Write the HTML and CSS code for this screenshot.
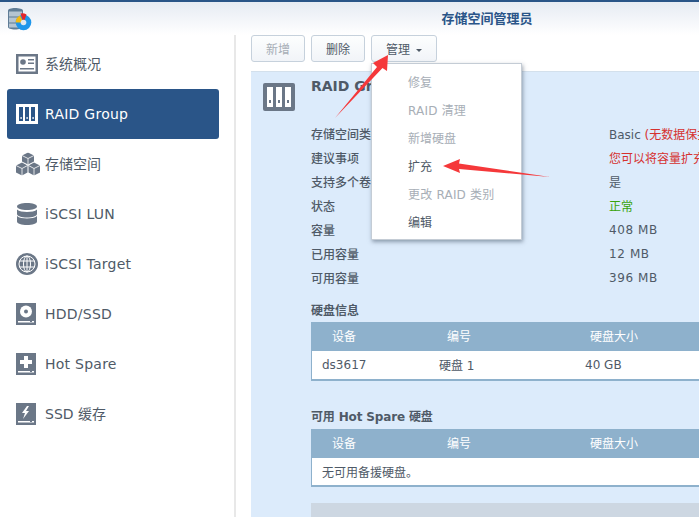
FILE: index.html
```
<!DOCTYPE html>
<html lang="zh-CN">
<head>
<meta charset="utf-8">
<title>存储空间管理员</title>
<link rel="stylesheet" href="styles.css">
</head>
<body>
<div class="app">
  <header class="header">
    <svg class="logo" width="24" height="23" viewBox="0 0 24 23">
      <path d="M0 2.500C0 1 3 0 7 0s8 1 8 2.500V19c0 1.500-4 2.500-8 2.500S0 20.500 0 19z" fill="#5f7c96"/>
      <path d="M1 3.500h13v5H1zM1 9.500h13v5H1zM1 15.500h13v4H1z" fill="#b4c4d2"/>
      <circle cx="15.500" cy="14.500" r="7.800" fill="#1e96ea"/>
      <path d="M7.700 14.500A7.800 7.800 0 0 1 12 7.500l3.500 7z" fill="#f5b90f"/>
      <path d="M12.500 5.500a7.800 7.800 0 0 1 6 1l-3 8z" fill="#e3262b"/>
      <circle cx="15.500" cy="14.500" r="2.800" fill="#dfe8f0"/>
    </svg>
    <div class="title">存储空间管理员</div>
  </header>
  <div class="main">
    <nav class="side">
      <a class="item">
        <svg class="ico" width="22" height="20" viewBox="0 0 22 20"><path d="M0 0h22v20H0z" fill="#6b7787"/><path d="M2.500 2.500h17v15h-17z" fill="#fff"/><circle cx="7" cy="8" r="2.800" fill="#6b7787"/><path d="M4 14h14v1.500H4zM12 5h6v1.500h-6zM12 8.500h6V10h-6z" fill="#6b7787"/></svg>
        <span>系统概况</span>
      </a>
      <a class="item active">
        <svg class="ico" width="22" height="20" viewBox="0 0 22 20"><path d="M0 0h22v20H0z" fill="#fff"/><path d="M3 3h4v14H3zM9 3h4v14H9zM15 3h4v14h-4z" fill="#2a5588"/><path d="M4.500 13h1.200v2H4.500zM10.500 13h1.200v2h-1.200zM16.500 13h1.200v2h-1.200z" fill="#fff"/></svg>
        <span class="lat">RAID Group</span>
      </a>
      <a class="item">
        <svg class="ico" width="24" height="23" viewBox="0 0 24 23"><path d="M12 0l6 3v6l-6 3-6-3V3zM6 10l5.500 3v7L6 23l-6-3v-7zM18 10l6 3v7l-6 3-5.500-3v-7z" fill="#6b7787"/><path d="M6 3l6 3 6-3M12 6v6M0 13l6 3 5.500-3M6 16v7M12.500 13l5.500 3 6-3M18 16v7" stroke="#fff" stroke-width=".8" fill="none"/></svg>
        <span>存储空间</span>
      </a>
      <a class="item">
        <svg class="ico" width="22" height="22" viewBox="0 0 22 22"><path d="M1 3.500C1 1.500 5.500 0 11 0s10 1.500 10 3.500S16.500 7 11 7 1 5.500 1 3.500zM1 6.500C3 8.300 7 9 11 9s8-.7 10-2.500v4.500c0 2-4.500 3.500-10 3.500S1 13 1 11zM1 13c2 1.800 6 2.500 10 2.500s8-.7 10-2.500v5.500c0 2-4.500 3.500-10 3.500s-10-1.500-10-3.500z" fill="#6b7787"/></svg>
        <span class="lat">iSCSI LUN</span>
      </a>
      <a class="item">
        <svg class="ico" width="22" height="22" viewBox="0 0 22 22"><circle cx="11" cy="11" r="11" fill="#6b7787"/><g fill="none" stroke="#fff" stroke-width="1"><circle cx="11" cy="11" r="8"/><ellipse cx="11" cy="11" rx="3.500" ry="8"/><path d="M11 3v16M3.500 8h15M3.500 14h15"/></g></svg>
        <span class="lat">iSCSI Target</span>
      </a>
      <a class="item">
        <svg class="ico" width="20" height="22" viewBox="0 0 20 22"><path d="M0 0h20v22H0z" fill="#6b7787"/><circle cx="10" cy="8.500" r="6" fill="#fff"/><circle cx="10" cy="8.500" r="2" fill="#6b7787"/><path d="M2 18h16v1.500H2z" fill="#fff"/><path d="M14 18h2v1h-2z" fill="#6b7787"/></svg>
        <span class="lat">HDD/SSD</span>
      </a>
      <a class="item">
        <svg class="ico" width="20" height="22" viewBox="0 0 20 22"><path d="M0 0h20v22H0z" fill="#6b7787"/><path d="M8 3h4v4h4v4h-4v4H8v-4H4V7h4z" fill="#fff"/><path d="M2 18h16v1.500H2z" fill="#fff"/><path d="M14 18h2v1h-2z" fill="#6b7787"/></svg>
        <span class="lat">Hot Spare</span>
      </a>
      <a class="item">
        <svg class="ico" width="20" height="22" viewBox="0 0 20 22"><path d="M0 0h20v22H0z" fill="#6b7787"/><path d="M11 3L6 10h3l-2 6 6-8h-3l3-5z" fill="#fff"/><path d="M2 18h16v1.500H2z" fill="#fff"/><path d="M14 18h2v1h-2z" fill="#6b7787"/></svg>
        <span>SSD 缓存</span>
      </a>
    </nav>
    <section class="content">
      <div class="toolbar">
        <button class="btn off">新增</button>
        <button class="btn">删除</button>
        <button class="btn menu-btn">管理<i class="caret"></i></button>
      </div>
      <div class="panel">
        <svg class="raid-ico" width="32" height="28" viewBox="0 0 32 28"><path d="M2 0h28a2 2 0 0 1 2 2v24a2 2 0 0 1-2 2H2a2 2 0 0 1-2-2V2a2 2 0 0 1 2-2z" fill="#6b7787"/><path d="M4 4h6v20H4zM13 4h6v20h-6zM22 4h6v20h-6z" fill="#fff"/><path d="M6 17h2v3H6zM15 17h2v3h-2zM24 17h2v3h-2z" fill="#6b7787"/></svg>
        <div class="detail">
          <h2 class="name">RAID Group 1</h2>
          <dl class="info">
            <dt>存储空间类型</dt><dd>Basic <span class="red">(无数据保护)</span></dd>
            <dt>建议事项</dt><dd class="red">您可以将容量扩充</dd>
            <dt>支持多个卷</dt><dd>是</dd>
            <dt>状态</dt><dd class="green">正常</dd>
            <dt>容量</dt><dd class="num">408 MB</dd>
            <dt>已用容量</dt><dd class="num">12 MB</dd>
            <dt>可用容量</dt><dd class="num">396 MB</dd>
          </dl>
          <h3 class="sec first">硬盘信息</h3>
          <div class="table">
            <div class="thead"><span class="c1">设备</span><span class="c2">编号</span><span class="c3">硬盘大小</span></div>
            <div class="trow"><span class="d1">ds3617</span><span class="d2">硬盘 1</span><span class="d3">40 GB</span></div>
          </div>
          <h3 class="sec second">可用 Hot Spare 硬盘</h3>
          <div class="table">
            <div class="thead"><span class="c1">设备</span><span class="c2">编号</span><span class="c3">硬盘大小</span></div>
            <div class="trow short"><span class="d1 wide">无可用备援硬盘。</span></div>
          </div>
          <div class="bar"></div>
        </div>
      </div>
    </section>
  </div>
  <ul class="menu">
    <li class="dis">修复</li>
    <li class="dis lat-sm">RAID 清理</li>
    <li class="dis">新增硬盘</li>
    <li>扩充</li>
    <li class="dis lat-sm">更改 RAID 类别</li>
    <li>编辑</li>
  </ul>
  <svg class="arrows" width="699" height="517" viewBox="0 0 699 517">
    <path d="M335 118L377 67 373 63 388 55 387 71 382.500 68z" fill="#f5383a"/>
    <path d="M443 166L460 159 459 163.500 550 177 459 169 460 173z" fill="#f5383a"/>
  </svg>
</div>
</body>
</html>
```
FILE: styles.css
```
* { box-sizing: border-box; }
html, body { margin: 0; padding: 0; height: 100%; overflow: hidden; }
body { background: #fff; color: #4f5a67; font-family: "DejaVu Sans", "Noto Sans CJK SC", sans-serif; font-size: 12px; }
.app { position: relative; width: 699px; height: 517px; overflow: hidden; display: flex; flex-direction: column; }
.header { flex: none; height: 35px; border-top: 2px solid #2a5588; background: linear-gradient(#e6ebf3, #fff); display: flex; align-items: center; justify-content: center; padding-left: 275px; position: relative; }
.logo { position: absolute; left: 8px; top: 6px; }
.title { font-size: 13px; font-weight: 700; color: #2a5588; margin-top: -2px; }
.main { flex: 1; display: flex; min-height: 0; }
.side { flex: none; width: 236px; padding: 4px 15px 0 7px; border-right: 2px solid #e8e8e8; display: flex; flex-direction: column; }
.item { height: 50px; display: flex; align-items: center; font-size: 14px; color: #4f5a67; border-radius: 3px; position: relative; }
.item .ico { position: absolute; left: 9px; top: 50%; transform: translateY(-50%); }
.item span { margin-left: 38px; margin-bottom: 2px; }
.item span.lat { letter-spacing: .25px; margin-bottom: 0; }
.item.active { background: #2a5588; color: #fff; }
.content { flex: 1; min-width: 0; padding-left: 15px; display: flex; flex-direction: column; }
.toolbar { flex: none; display: flex; gap: 6px; height: 36px; }
.btn { width: 54px; height: 27px; padding: 0; border: 1px solid #c6d1dc; border-radius: 3px; background: linear-gradient(#fdfefe, #f1f4f8); font-family: inherit; font-size: 12px; color: #4f5a67; }
.btn.off { color: #a7aeb6; }
.menu-btn { width: 66px; }
.caret { display: inline-block; margin-left: 6px; vertical-align: 2px; border-left: 3px solid transparent; border-right: 3px solid transparent; border-top: 3px solid #4f5a67; }
.panel { flex: 1; min-height: 0; background: #dcebfb; border-top: 1px solid #d3e0ec; padding: 11px 0 0 12px; display: flex; overflow: hidden; }
.raid-ico { flex: none; }
.detail { flex: none; width: 600px; margin-left: 16px; margin-top: -5px; }
.name { margin: 0; font-size: 14px; font-weight: 700; line-height: 17px; color: #4f5a67; }
.info { margin: 26px 0 0; display: grid; grid-template-columns: 298px 1fr; grid-auto-rows: 24px; align-items: center; white-space: nowrap; }
.info dt { font-weight: 500; }
.info dd { margin: 0; }
.info .num { letter-spacing: .6px; padding-top: 2px; }
.red { color: #d6312f; }
.green { color: #3aa30b; }
.sec { margin: 0; font-size: 12px; font-weight: 700; line-height: 16px; color: #4f5a67; }
.first { margin-top: 14px; margin-bottom: 3px; }
.second { margin-top: 28px; margin-bottom: 4px; letter-spacing: -.15px; }
.table { border: solid #8eb1cc; border-width: 0 0 2px 1px; background: #fff; }
.thead, .trow { display: flex; align-items: center; white-space: nowrap; }
.thead { height: 29px; background: #8eb1cc; color: #fff; margin-left: -1px; padding-bottom: 2px; }
.trow { height: 28px; padding-bottom: 1px; }
.trow.short { height: 27px; }
.c1 { width: 136px; padding-left: 21px; }
.c2 { width: 143px; }
.d1 { width: 127px; padding-left: 10px; }
.d1.wide { width: auto; }
.d2 { width: 146px; }
.bar { margin-top: 16px; height: 40px; background: #cdd7e2; }
.menu { position: absolute; left: 371px; top: 63px; width: 151px; height: 177px; margin: 0; padding: 5px 0 0; list-style: none; background: #fff; border: 1px solid #c4ccd5; box-shadow: 1px 2px 4px rgba(60,75,95,.5); }
.menu li { height: 28px; line-height: 28px; padding-left: 36px; color: #4f5a67; white-space: nowrap; }
.menu li.dis { color: #a7aeb6; }
.menu li.lat-sm { letter-spacing: .2px; }
.arrows { position: absolute; left: 0; top: 0; pointer-events: none; }
```
